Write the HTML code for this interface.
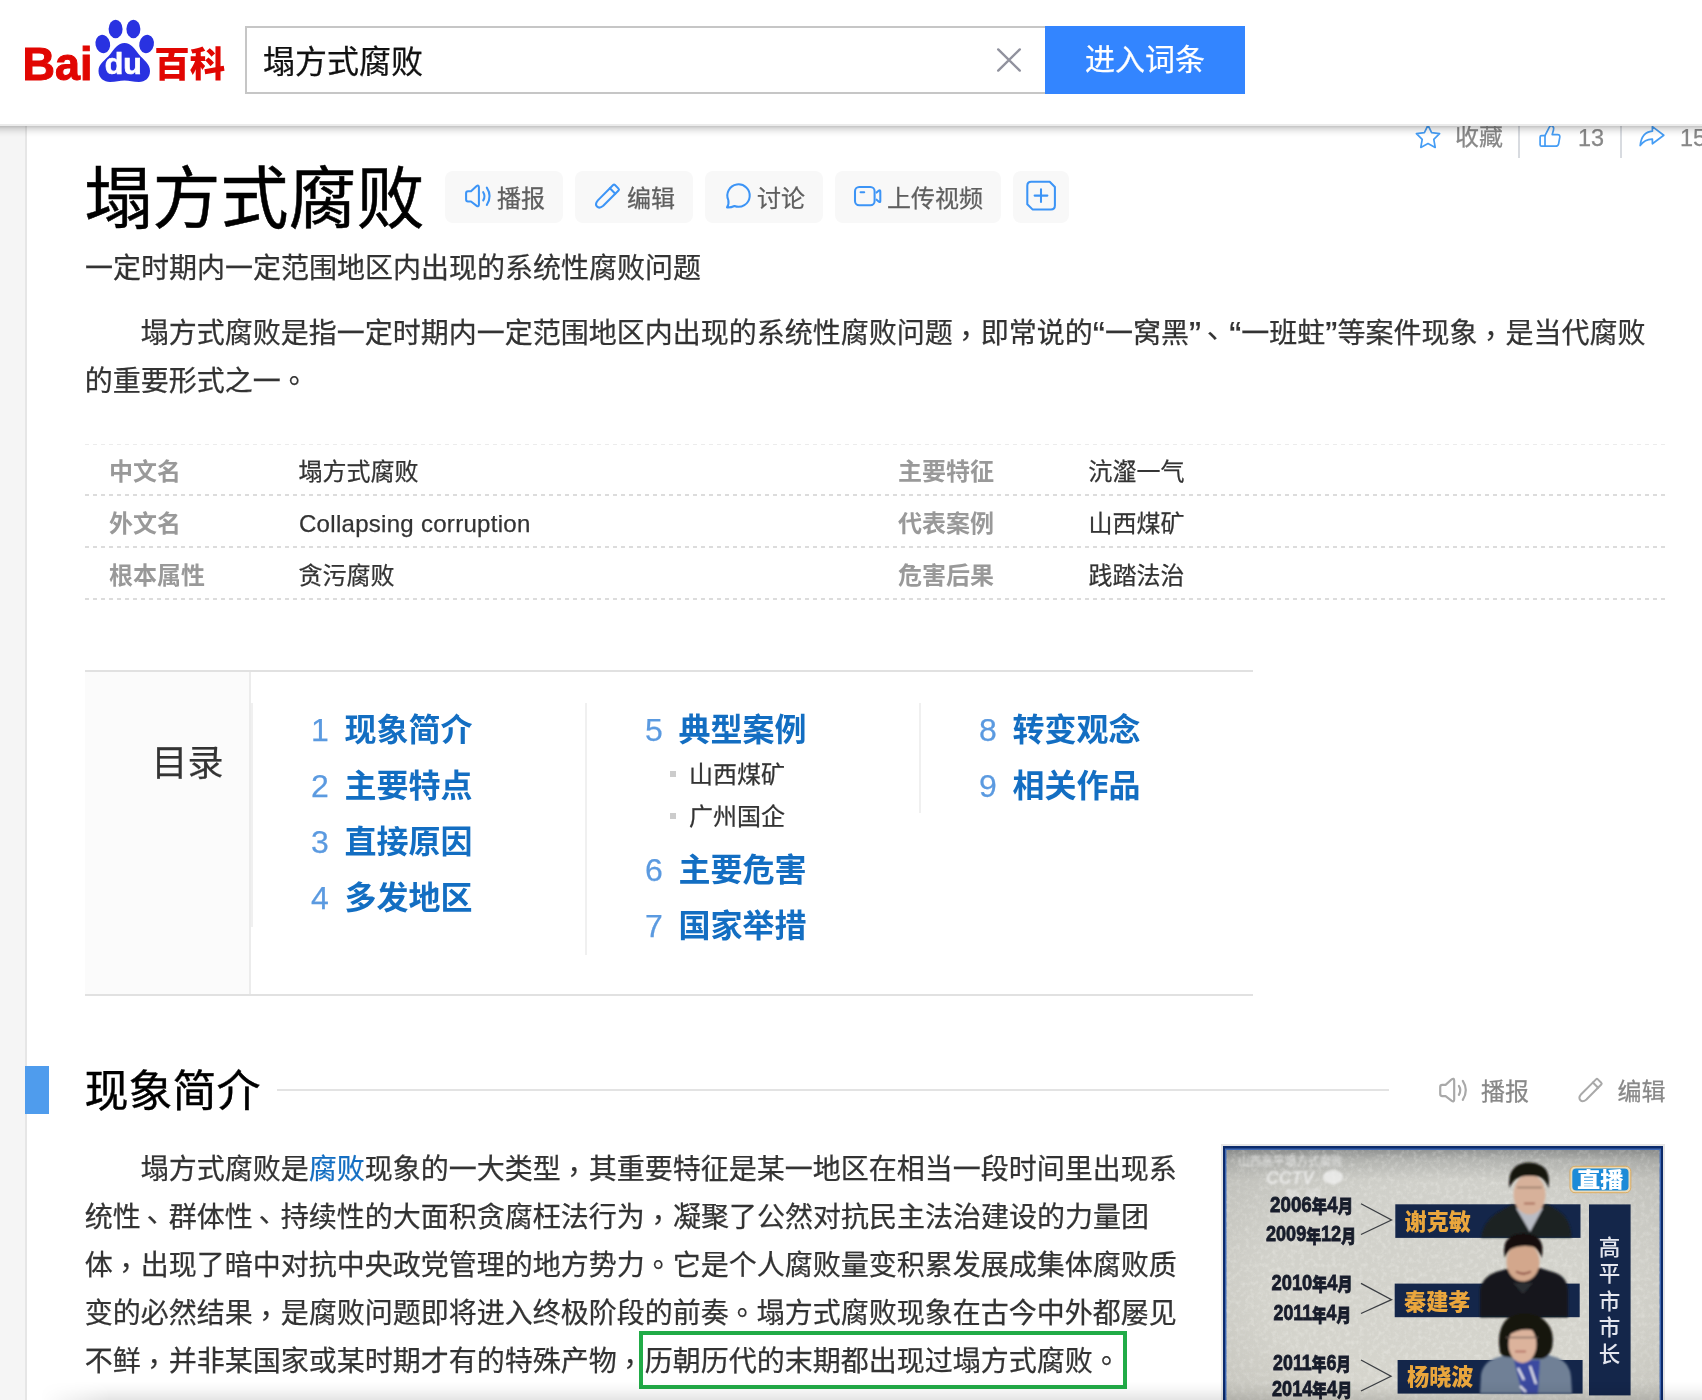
<!DOCTYPE html>
<html lang="zh-CN">
<head>
<meta charset="utf-8">
<title>塌方式腐败_百度百科</title>
<style>
html,body{margin:0;padding:0;}
body{will-change:transform;width:1702px;height:1400px;overflow:hidden;background:#fff;position:relative;
 font-family:"Liberation Sans","Noto Sans CJK SC",sans-serif;color:#333;-webkit-text-stroke-width:0.25px;}
.abs{position:absolute;white-space:nowrap;}
#strip{position:absolute;left:0;top:124px;width:25px;height:1276px;background:#f5f5f5;border-right:2px solid #e6e6e6;}
#header{position:absolute;left:0;top:0;width:1702px;height:124px;background:#fff;border-bottom:2px solid #ebebeb;z-index:10;}
#hshadow{position:absolute;left:0;top:126px;width:1702px;height:11px;z-index:9;background:linear-gradient(rgba(0,0,0,.235),rgba(0,0,0,.13) 25%,rgba(0,0,0,.05) 55%,rgba(0,0,0,.015) 80%,rgba(0,0,0,0));}
#sbox{position:absolute;left:245px;top:26px;width:798px;height:64px;border:2px solid #c6c6c6;border-right:none;background:#fff;}
#sbox span{position:absolute;left:16px;top:1.5px;line-height:64px;font-size:32px;color:#111;}
#sbtn{position:absolute;left:1045px;top:26px;width:200px;height:68px;background:#3385ff;color:#fff;font-size:30px;line-height:68.5px;text-align:center;}
/* toolbar */
.tb{position:absolute;top:120px;font-size:24px;line-height:34px;color:#888;white-space:nowrap;}
.sep{position:absolute;top:118px;width:2px;height:40px;background:#d8dbe0;}
/* title */
#title{left:84.5px;top:149.5px;font-size:68px;line-height:98px;color:#000;font-weight:400;-webkit-text-stroke:0.5px #000;}
.btn{position:absolute;top:171px;height:52px;background:#f8f8f8;border-radius:8px;font-size:24px;line-height:51px;color:#5f5f5f;white-space:nowrap;}
.btn svg{position:absolute;}
.btn span{position:absolute;top:1.5px;}
#sub{left:85px;top:245px;font-size:28px;line-height:48px;color:#333;}
.para{-webkit-text-stroke:0.25px #333;position:absolute;left:84.8px;font-size:28px;line-height:48px;color:#333;white-space:nowrap;}
/* info */
.dl{position:absolute;left:85px;width:1581px;height:2px;background:repeating-linear-gradient(90deg,#dcdcdc 0 4px,transparent 4px 8px);}
.lab{-webkit-text-stroke-width:0;position:absolute;font-size:24px;line-height:52px;color:#999;font-weight:700;white-space:nowrap;}
.val{position:absolute;font-size:24px;line-height:52px;color:#333;white-space:nowrap;}
/* toc */
#toc{position:absolute;left:85px;top:670px;width:1168px;height:322px;border-top:2px solid #e1e1e1;border-bottom:2px solid #e1e1e1;}
#tocl{position:absolute;left:0;top:0;width:164px;height:322px;background:#fbfbfb;border-right:2px solid #ececec;}
#tocl span{position:absolute;left:66.5px;top:64px;font-size:36px;line-height:56px;color:#333;}
.vs{position:absolute;width:2px;background:#f0f0f0;}
.tn{position:absolute;font-size:32px;line-height:56px;color:#5b9ae0;white-space:nowrap;}
.tt{-webkit-text-stroke-width:0;position:absolute;font-size:32px;line-height:56px;color:#136ec2;font-weight:700;white-space:nowrap;}
.ts{position:absolute;font-size:24px;line-height:42px;color:#333;white-space:nowrap;}
.bul{position:absolute;width:6px;height:6px;background:#ccc;}
/* section */
#blk{position:absolute;left:25px;top:1066px;width:24px;height:48px;background:#4f9ced;}
#h2{left:84.5px;top:1060px;font-size:44px;line-height:64px;color:#000;-webkit-text-stroke:0.4px #000;}
#h2l{position:absolute;left:277px;top:1089px;width:1112px;height:2px;background:#e3e3e3;}
.act{position:absolute;top:1074.5px;font-size:24px;line-height:34px;color:#888;white-space:nowrap;}
.pc{position:relative;left:6.5px;top:-5px;}
.pp{position:relative;left:8px;top:-8.5px;}
.pd{position:relative;left:6px;top:-5.5px;}
.q{font-size:36.4px;line-height:0;position:relative;top:5px;}
a{color:#136ec2;text-decoration:none;-webkit-text-stroke:0.25px #136ec2;}
#bshadow{-webkit-mask-image:linear-gradient(90deg,transparent,#000 70px);mask-image:linear-gradient(90deg,transparent,#000 70px);position:absolute;left:40px;top:1382px;width:1662px;height:18px;z-index:8;background:linear-gradient(rgba(0,0,0,0),rgba(0,0,0,.03) 40%,rgba(0,0,0,.1));}
#green{position:absolute;left:639px;top:1330.5px;width:480px;height:50px;border:4px solid #21ab47;}
/* picture */
</style>
</head>
<body>
<div id="strip"></div>

<!-- toolbar under header -->
<div class="tb" style="left:1455px;">收藏</div>
<div class="sep" style="left:1518px;"></div>
<div class="tb" style="left:1578px;top:121px;font-size:23.5px;">13</div>
<div class="sep" style="left:1620px;"></div>
<div class="tb" style="left:1680px;top:121px;font-size:23.5px;">15</div>

<div id="hshadow"></div>

<!-- icons layer -->
<svg id="icons" style="position:absolute;left:0;top:0;z-index:5;pointer-events:none;" width="1702" height="1400" viewBox="0 0 1702 1400" fill="none" stroke-linecap="round" stroke-linejoin="round">
 <g stroke="#3c94f6" stroke-width="2.05">
  <!-- speaker -->
  <path d="M471 191.2 L476.4 186.3 Q478.9 184.4 478.9 187.5 L478.9 204.4 Q478.9 207.4 476.4 205.6 L471 201.5 L468 201.5 Q466.1 201.5 466.1 199.6 L466.1 193.1 Q466.1 191.2 468 191.2 Z"/>
  <path d="M483.2 192.2 Q485.8 196.2 483.2 200.4"/>
  <path d="M486.8 187.6 Q492.4 196.2 486.8 205"/>
  <!-- pencil -->
  <g transform="translate(607.2 196.4) rotate(-45)">
   <path d="M-9.4 -3.8 L12.2 -3.8 Q13.5 -3.8 13.5 -2.5 L13.5 2.5 Q13.5 3.8 12.2 3.8 L-9.4 3.8 Q-14.4 3.4 -14.4 0 Q-14.4 -3.4 -9.4 -3.8 Z"/>
   <path d="M7.6 -3.8 L7.6 3.8"/>
  </g>
  <!-- chat -->
  <path d="M728.3 200.1 A11.2 11.2 0 1 1 734.5 206 Q731 207.6 727 207.4 Q729.2 204.4 728.3 200.1 Z"/>
  <!-- video -->
  <rect x="855" y="187" width="19.6" height="18.2" rx="4.2"/>
  <path d="M860.6 192.3 L864.2 192.3"/>
  <path d="M876.6 192.6 L878.9 190.6 Q880.3 189.6 880.3 191.4 L880.3 200.9 Q880.3 202.7 878.9 201.7 L876.6 199.7"/>
  <!-- plus doc -->
  <path d="M1031.3 181.8 L1049.7 181.8 L1054.9 187 L1054.9 205.4 Q1054.9 209.4 1050.9 209.4 L1032.5 209.4 L1027.3 204.2 L1027.3 185.8 Q1027.3 181.8 1031.3 181.8 Z"/>
  <path d="M1034.6 195.6 H1047.4 M1041 189.2 V202"/>
 </g>
 <g stroke="#459df5" stroke-width="1.7">
  <!-- star -->
  <path d="M1428 125.2 L1431.6 132.6 L1439.6 133.7 L1433.8 139.4 L1435.2 147.4 L1428 143.6 L1420.8 147.4 L1422.2 139.4 L1416.4 133.7 L1424.4 132.6 Z"/>
  <!-- thumb -->
  <path d="M1545 135.6 L1549.2 127.4 Q1550.6 124.6 1552.8 126.4 Q1554.2 127.8 1553.5 130 L1552.2 134.6 L1557.6 134.6 Q1560.2 134.6 1559.8 137.2 L1558.6 143.8 Q1558.1 146.2 1555.6 146.2 L1545 146.2 Z"/>
  <path d="M1545 135.6 L1541.6 135.6 Q1540.1 135.6 1540.1 137.1 L1540.1 144.7 Q1540.1 146.2 1541.6 146.2 L1545 146.2"/>
  <!-- share -->
  <path d="M1652.4 126.6 L1663.8 135.2 L1652.4 143.8 L1652.4 139.2 Q1645 139 1640.2 145.6 Q1641.6 132 1652.4 131.2 Z"/>
 </g>
 <g stroke="#a9a9a9" stroke-width="2">
  <g transform="translate(1453.2 1090) scale(1.09) translate(-478 -195.9)">
   <path d="M471 191.2 L476.4 186.3 Q478.9 184.4 478.9 187.5 L478.9 204.4 Q478.9 207.4 476.4 205.6 L471 201.5 L468 201.5 Q466.1 201.5 466.1 199.6 L466.1 193.1 Q466.1 191.2 468 191.2 Z"/>
   <path d="M483.2 192.2 Q485.8 196.2 483.2 200.4"/>
   <path d="M486.8 187.6 Q492.4 196.2 486.8 205"/>
  </g>
  <g transform="translate(1590.3 1090.3) rotate(-45)">
   <path d="M-9.2 -3.7 L11.8 -3.7 Q13.1 -3.7 13.1 -2.4 L13.1 2.4 Q13.1 3.7 11.8 3.7 L-9.2 3.7 Q-14 3.3 -14 0 Q-14 -3.3 -9.2 -3.7 Z"/>
   <path d="M7.3 -3.7 L7.3 3.7"/>
  </g>
 </g>
</svg>
<div id="header">
  <svg id="logo" style="position:absolute;left:0;top:0;" width="240" height="125" viewBox="0 0 240 125">
  <g fill="#2932e1">
    <ellipse cx="102.8" cy="44" rx="7.3" ry="9.2" transform="rotate(-12 102.8 44)"/>
    <ellipse cx="115.6" cy="29" rx="7" ry="9.2"/>
    <ellipse cx="133.4" cy="29" rx="7" ry="9.2"/>
    <ellipse cx="146.6" cy="44" rx="7.3" ry="9.2" transform="rotate(12 146.6 44)"/>
    <path d="M124.5 43 C131 43 135 49 139 54.5 C143.5 60 150 63.5 150 71 C150 78 145 82 139 82 C133 82 129.5 80.5 124.5 80.5 C119.5 80.5 116 82 110 82 C104 82 98.5 78 98.5 71 C98.5 63.5 105.5 60 110 54.5 C114 49 118 43 124.5 43 Z"/>
  </g>
  <text x="22.6" y="80" font-family="Liberation Sans, sans-serif" font-weight="700" font-size="45.5" fill="#e10602" stroke="#e10602" stroke-width="1" textLength="70" lengthAdjust="spacingAndGlyphs">Bai</text>
  <text x="104.8" y="73.8" font-family="Liberation Sans, sans-serif" font-weight="700" font-size="29" fill="#fff" stroke="#fff" stroke-width="0.7" textLength="37" lengthAdjust="spacingAndGlyphs">du</text>
  <text x="154.2" y="76.6" font-family="Noto Sans CJK SC, sans-serif" font-weight="900" font-size="35" fill="#e10602" textLength="71" lengthAdjust="spacingAndGlyphs">百科</text>
</svg>
  <div id="sbox"><span>塌方式腐败</span></div>
  <svg style="position:absolute;left:995px;top:46px;" width="28" height="28" viewBox="995 46 28 28"><path d="M998.2 49.4 L1019.8 70.6 M1019.8 49.4 L998.2 70.6" stroke="#91929e" stroke-width="2.4" stroke-linecap="round" fill="none"/></svg>
  <div id="sbtn">进入词条</div>
</div>

<div id="title" class="abs">塌方式腐败</div>
<div class="btn" style="left:445px;width:118px;"><span style="left:52px;">播报</span></div>
<div class="btn" style="left:575px;width:118px;"><span style="left:52px;">编辑</span></div>
<div class="btn" style="left:705px;width:118px;"><span style="left:52px;">讨论</span></div>
<div class="btn" style="left:835px;width:166px;"><span style="left:52px;">上传视频</span></div>
<div class="btn" style="left:1013px;width:56px;"></div>

<div id="sub" class="abs">一定时期内一定范围地区内出现的系统性腐败问题</div>

<div class="para" style="top:310px;"><span style="margin-left:56px;"></span>塌方式腐败是指一定时期内一定范围地区内出现的系统性腐败问题<span class="pc">，</span>即常说的<span class="q">“</span>一窝黑<span class="q">”</span><span class="pd">、</span><span class="q">“</span>一班蛀<span class="q">”</span>等案件现象<span class="pc">，</span>是当代腐败<br>的重要形式之一<span class="pp">。</span></div>

<!-- info box -->
<div class="dl" style="top:444px;height:1px;opacity:.55;"></div>
<div class="dl" style="top:494px;"></div>
<div class="dl" style="top:546px;"></div>
<div class="dl" style="top:598px;"></div>
<div class="lab" style="left:109px;top:446px;">中文名</div><div class="val" style="left:298.5px;top:446px;">塌方式腐败</div>
<div class="lab" style="left:109px;top:498px;">外文名</div><div class="val" style="left:298.5px;top:498px;left:299px;letter-spacing:0.29px;">Collapsing corruption</div>
<div class="lab" style="left:109px;top:550px;">根本属性</div><div class="val" style="left:298.5px;top:550px;">贪污腐败</div>
<div class="lab" style="left:898px;top:446px;">主要特征</div><div class="val" style="left:1088.5px;top:446px;">沆瀣一气</div>
<div class="lab" style="left:898px;top:498px;">代表案例</div><div class="val" style="left:1088.5px;top:498px;">山西煤矿</div>
<div class="lab" style="left:898px;top:550px;">危害后果</div><div class="val" style="left:1088.5px;top:550px;">践踏法治</div>

<!-- toc -->
<div id="toc"><div id="tocl"><span>目录</span></div></div>
<div class="vs" style="left:251px;top:703px;height:224px;"></div>
<div class="vs" style="left:585px;top:703px;height:252px;"></div>
<div class="vs" style="left:919px;top:703px;height:110px;"></div>

<div class="tn" style="left:311px;top:702px;">1</div><div class="tt" style="left:344.5px;top:702px;">现象简介</div>
<div class="tn" style="left:311px;top:758px;">2</div><div class="tt" style="left:344.5px;top:758px;">主要特点</div>
<div class="tn" style="left:311px;top:814px;">3</div><div class="tt" style="left:344.5px;top:814px;">直接原因</div>
<div class="tn" style="left:311px;top:870px;">4</div><div class="tt" style="left:344.5px;top:870px;">多发地区</div>

<div class="tn" style="left:645px;top:702px;">5</div><div class="tt" style="left:678.5px;top:702px;">典型案例</div>
<div class="bul" style="left:670px;top:771px;"></div><div class="ts" style="left:689px;top:753.5px;">山西煤矿</div>
<div class="bul" style="left:670px;top:813px;"></div><div class="ts" style="left:689px;top:795.5px;">广州国企</div>
<div class="tn" style="left:645px;top:842px;">6</div><div class="tt" style="left:678.5px;top:842px;">主要危害</div>
<div class="tn" style="left:645px;top:898px;">7</div><div class="tt" style="left:678.5px;top:898px;">国家举措</div>

<div class="tn" style="left:979px;top:702px;">8</div><div class="tt" style="left:1012.5px;top:702px;">转变观念</div>
<div class="tn" style="left:979px;top:758px;">9</div><div class="tt" style="left:1012.5px;top:758px;">相关作品</div>

<!-- section -->
<div id="blk"></div>
<div id="h2" class="abs">现象简介</div>
<div id="h2l"></div>
<div class="act" style="left:1481px;">播报</div>
<div class="act" style="left:1617.5px;">编辑</div>

<div class="para" style="top:1146px;"><span style="margin-left:56px;"></span>塌方式腐败是<a>腐败</a>现象的一大类型<span class="pc">，</span>其重要特征是某一地区在相当一段时间里出现系<br>统性<span class="pd">、</span>群体性<span class="pd">、</span>持续性的大面积贪腐枉法行为<span class="pc">，</span>凝聚了公然对抗民主法治建设的力量团<br>体<span class="pc">，</span>出现了暗中对抗中央政党管理的地方势力<span class="pp">。</span>它是个人腐败量变积累发展成集体腐败质<br>变的必然结果<span class="pc">，</span>是腐败问题即将进入终极阶段的前奏<span class="pp">。</span>塌方式腐败现象在古今中外都屡见<br>不鲜<span class="pc">，</span>并非某国家或某时期才有的特殊产物<span class="pc">，</span>历朝历代的末期都出现过塌方式腐败<span class="pp">。</span></div>
<div id="green"></div>
<div id="bshadow"></div>

<svg id="pic" style="position:absolute;left:1221px;top:1144px;" width="444" height="256" viewBox="1221 1144 444 256">
 <defs>
  <linearGradient id="bgg" x1="0" y1="0" x2="0" y2="1">
   <stop offset="0" stop-color="#989a99"/><stop offset="0.04" stop-color="#b9bab6"/><stop offset="0.12" stop-color="#d0d0ca"/><stop offset="1" stop-color="#d6d5cd"/>
  </linearGradient>
  <radialGradient id="vig" cx="0.5" cy="0.55" r="0.75"><stop offset="0.55" stop-color="#000" stop-opacity="0"/><stop offset="1" stop-color="#000" stop-opacity="0.1"/></radialGradient>
  <filter id="bl" x="-10%" y="-10%" width="120%" height="120%"><feGaussianBlur stdDeviation="0.9"/></filter>
  <filter id="bl0" x="-5%" y="-5%" width="110%" height="110%"><feGaussianBlur stdDeviation="0.45"/></filter>
  <filter id="noise" x="0" y="0" width="100%" height="100%"><feTurbulence type="fractalNoise" baseFrequency="0.22" numOctaves="3" seed="7"/><feColorMatrix type="matrix" values="0 0 0 0 1  0 0 0 0 1  0 0 0 0 0.97  0 0 0 1.5 -0.66"/></filter>
  <filter id="bl2" x="-10%" y="-10%" width="120%" height="120%"><feGaussianBlur stdDeviation="1.1"/></filter>
 </defs>
 <rect x="1221" y="1144" width="444" height="256" fill="#e6e6e6"/>
 <rect x="1223" y="1146" width="440" height="254" fill="#0c2a6a"/>
 <rect x="1225" y="1148.5" width="436" height="252" fill="#3f68b4"/>
 <rect x="1226.5" y="1150" width="433" height="250" fill="url(#bgg)"/>
 <rect x="1226.5" y="1150" width="433" height="250" filter="url(#noise)" opacity="0.4"/>
 <rect x="1226.5" y="1150" width="433" height="250" fill="url(#vig)"/>
 <!-- watermark -->
 <g fill="#f6f6f6" opacity="0.7" font-family="Liberation Sans, Noto Sans CJK SC, sans-serif" filter="url(#bl)">
  <text x="1238" y="1165.5" font-size="12" textLength="105" lengthAdjust="spacingAndGlyphs">山西高平塌方式腐败</text>
  <text x="1266" y="1184" font-size="19" font-weight="700" font-style="italic" textLength="48" lengthAdjust="spacingAndGlyphs">CCTV</text>
  <ellipse cx="1333" cy="1177" rx="10" ry="7"/>
  <text x="1285" y="1198" font-size="10" textLength="36" lengthAdjust="spacingAndGlyphs">新 闻</text>
 </g>
 <!-- name bars -->
 <g fill="#14264a">
  <rect x="1395.3" y="1204.3" width="185.2" height="33.6"/>
  <rect x="1394.7" y="1283.6" width="185" height="33.6"/>
  <rect x="1397.6" y="1360" width="185" height="33.6"/>
  <rect x="1589" y="1204.4" width="41.6" height="191"/>
 </g>
 <!-- portraits -->
 <g filter="url(#bl)">
  <!-- person 1 -->
  <path d="M1481 1237.6 Q1483 1222 1497 1213 L1512 1204.5 L1548 1204.5 L1560 1212 Q1571 1220 1571.5 1237.6 Z" fill="#1b2022"/>
  <path d="M1516 1208 L1530 1232 L1543 1208 Z" fill="#b9bcc4"/>
  <ellipse cx="1529.5" cy="1194.5" rx="16" ry="20" fill="#d7b19a"/>
  <path d="M1509.5 1188 Q1507 1170 1519 1164.5 Q1531 1160 1542 1166 Q1551 1172 1548.5 1188 Q1545 1178 1538 1176.5 Q1524 1174 1516 1179 Q1512 1182 1509.5 1188 Z" fill="#15130f"/>
  <path d="M1517 1187.5 H1542" stroke="#7d6659" stroke-width="1.2" fill="none"/>
  <path d="M1524 1203.5 H1535" stroke="#a0604f" stroke-width="1.6" fill="none"/>
  <!-- person 2 -->
  <path d="M1480 1317.2 L1480 1290 Q1482 1277 1496 1272 L1510 1268 L1540 1268 L1556 1273 Q1568 1278 1568 1292 L1568 1317.2 Z" fill="#15181d"/>
  <ellipse cx="1523" cy="1262" rx="16.5" ry="19.5" fill="#d3a78c"/>
  <path d="M1505 1258 Q1501 1240 1514 1235 Q1526 1231 1537 1237 Q1545 1243 1541.5 1258 Q1538 1248 1532 1246.5 Q1519 1245 1511 1249 Q1507 1252 1505 1258 Z" fill="#14110e"/>
  <path d="M1516 1271.5 Q1523 1276 1531 1271.5" stroke="#8c4f43" stroke-width="1.8" fill="none"/>
  <path d="M1513 1283 L1523 1294 L1533 1283 Z" fill="#2a2d33"/>
  <!-- person 3 -->
  <path d="M1480 1393.4 L1481 1375 Q1483 1362 1497 1357.5 L1512 1353 L1542 1353 L1558 1358 Q1570 1363 1571 1377 L1572 1393.4 Z" fill="#6f8096"/>
  <path d="M1514 1360 L1522 1393.4 L1538 1393.4 L1540 1360 Z" fill="#3a4aa0"/>
  <path d="M1518 1368 L1524 1380 M1530 1366 L1536 1384 M1520 1386 L1526 1392" stroke="#e8e8f0" stroke-width="2.2" fill="none"/>
  <path d="M1500 1352 Q1496 1328 1508 1318 Q1523 1309 1540 1317 Q1556 1327 1552 1348 Q1549 1358 1541 1359 L1506 1357 Q1501 1356 1500 1352 Z" fill="#17130f"/>
  <ellipse cx="1522.5" cy="1344" rx="14" ry="19" fill="#dcb39c"/>
  <path d="M1505 1340 Q1506 1325 1520 1322 Q1534 1321 1541 1333 Q1530 1328 1521 1330 Q1510 1332 1505 1340 Z" fill="#17130f"/>
  <path d="M1506 1337.5 H1538" stroke="#6c5a55" stroke-width="1.2" fill="none"/>
  <path d="M1515 1351.5 H1526" stroke="#b0665c" stroke-width="1.6" fill="none"/>
 </g>
 <!-- dates -->
 <g fill="#171c2b" font-family="Liberation Sans, Noto Sans CJK SC, sans-serif" font-weight="900" font-size="22" stroke="#171c2b" stroke-width="0.8" filter="url(#bl0)">
  <text x="1270" y="1211.5" textLength="83" lengthAdjust="spacingAndGlyphs">2006<tspan font-size="18" dy="1.2">年</tspan><tspan dy="-1.2">4</tspan><tspan font-size="18" dy="1.2">月</tspan></text>
  <text x="1266" y="1241.3" textLength="90" lengthAdjust="spacingAndGlyphs">2009<tspan font-size="18" dy="1.2">年</tspan><tspan dy="-1.2">12</tspan><tspan font-size="18" dy="1.2">月</tspan></text>
  <text x="1271.5" y="1290.2" textLength="81" lengthAdjust="spacingAndGlyphs">2010<tspan font-size="18" dy="1.2">年</tspan><tspan dy="-1.2">4</tspan><tspan font-size="18" dy="1.2">月</tspan></text>
  <text x="1273.5" y="1320.3" textLength="77.5" lengthAdjust="spacingAndGlyphs">2011<tspan font-size="18" dy="1.2">年</tspan><tspan dy="-1.2">4</tspan><tspan font-size="18" dy="1.2">月</tspan></text>
  <text x="1273" y="1369.5" textLength="78" lengthAdjust="spacingAndGlyphs">2011<tspan font-size="18" dy="1.2">年</tspan><tspan dy="-1.2">6</tspan><tspan font-size="18" dy="1.2">月</tspan></text>
  <text x="1272" y="1395.7" textLength="80" lengthAdjust="spacingAndGlyphs">2014<tspan font-size="18" dy="1.2">年</tspan><tspan dy="-1.2">4</tspan><tspan font-size="18" dy="1.2">月</tspan></text>
 </g>
 <g stroke="#3a3d42" stroke-width="1.3" fill="none">
  <path d="M1361 1203.7 L1391.5 1220 L1361 1234.5"/>
  <path d="M1361 1283.4 L1391.5 1299.6 L1361 1313.5"/>
  <path d="M1361 1360 L1391 1376.3 L1361 1391"/>
 </g>
 <!-- names -->
 <g fill="#eaa63c" font-family="Noto Sans CJK SC, sans-serif" font-weight="900" font-size="22.5" filter="url(#bl0)">
  <text x="1404.5" y="1230.2" textLength="66.5" lengthAdjust="spacingAndGlyphs">谢克敏</text>
  <text x="1404" y="1309.8" textLength="66.5" lengthAdjust="spacingAndGlyphs">秦建孝</text>
  <text x="1407" y="1385.2" textLength="66.5" lengthAdjust="spacingAndGlyphs">杨晓波</text>
 </g>
 <!-- vertical title -->
 <g fill="#e4e6ee" font-family="Noto Sans CJK SC, sans-serif" font-weight="500" font-size="21.5" text-anchor="middle" filter="url(#bl0)">
  <text x="1609.6" y="1254.6">高</text>
  <text x="1609.6" y="1281">平</text>
  <text x="1609.6" y="1308.6">市</text>
  <text x="1609.6" y="1335.4">市</text>
  <text x="1609.6" y="1362">长</text>
 </g>
 <!-- live badge -->
 <rect x="1570" y="1166.3" width="60.8" height="26.4" rx="5" fill="#e9d9b8" stroke="#d9a24a" stroke-width="0.8"/>
 <rect x="1572.3" y="1168.4" width="56.2" height="22.2" rx="4" fill="#1d8bd8"/>
 <text x="1577" y="1187.3" fill="#fff" font-family="Noto Sans CJK SC, sans-serif" font-weight="900" font-size="21" textLength="46.5" lengthAdjust="spacingAndGlyphs">直播</text>
</svg>
</body>
</html>
